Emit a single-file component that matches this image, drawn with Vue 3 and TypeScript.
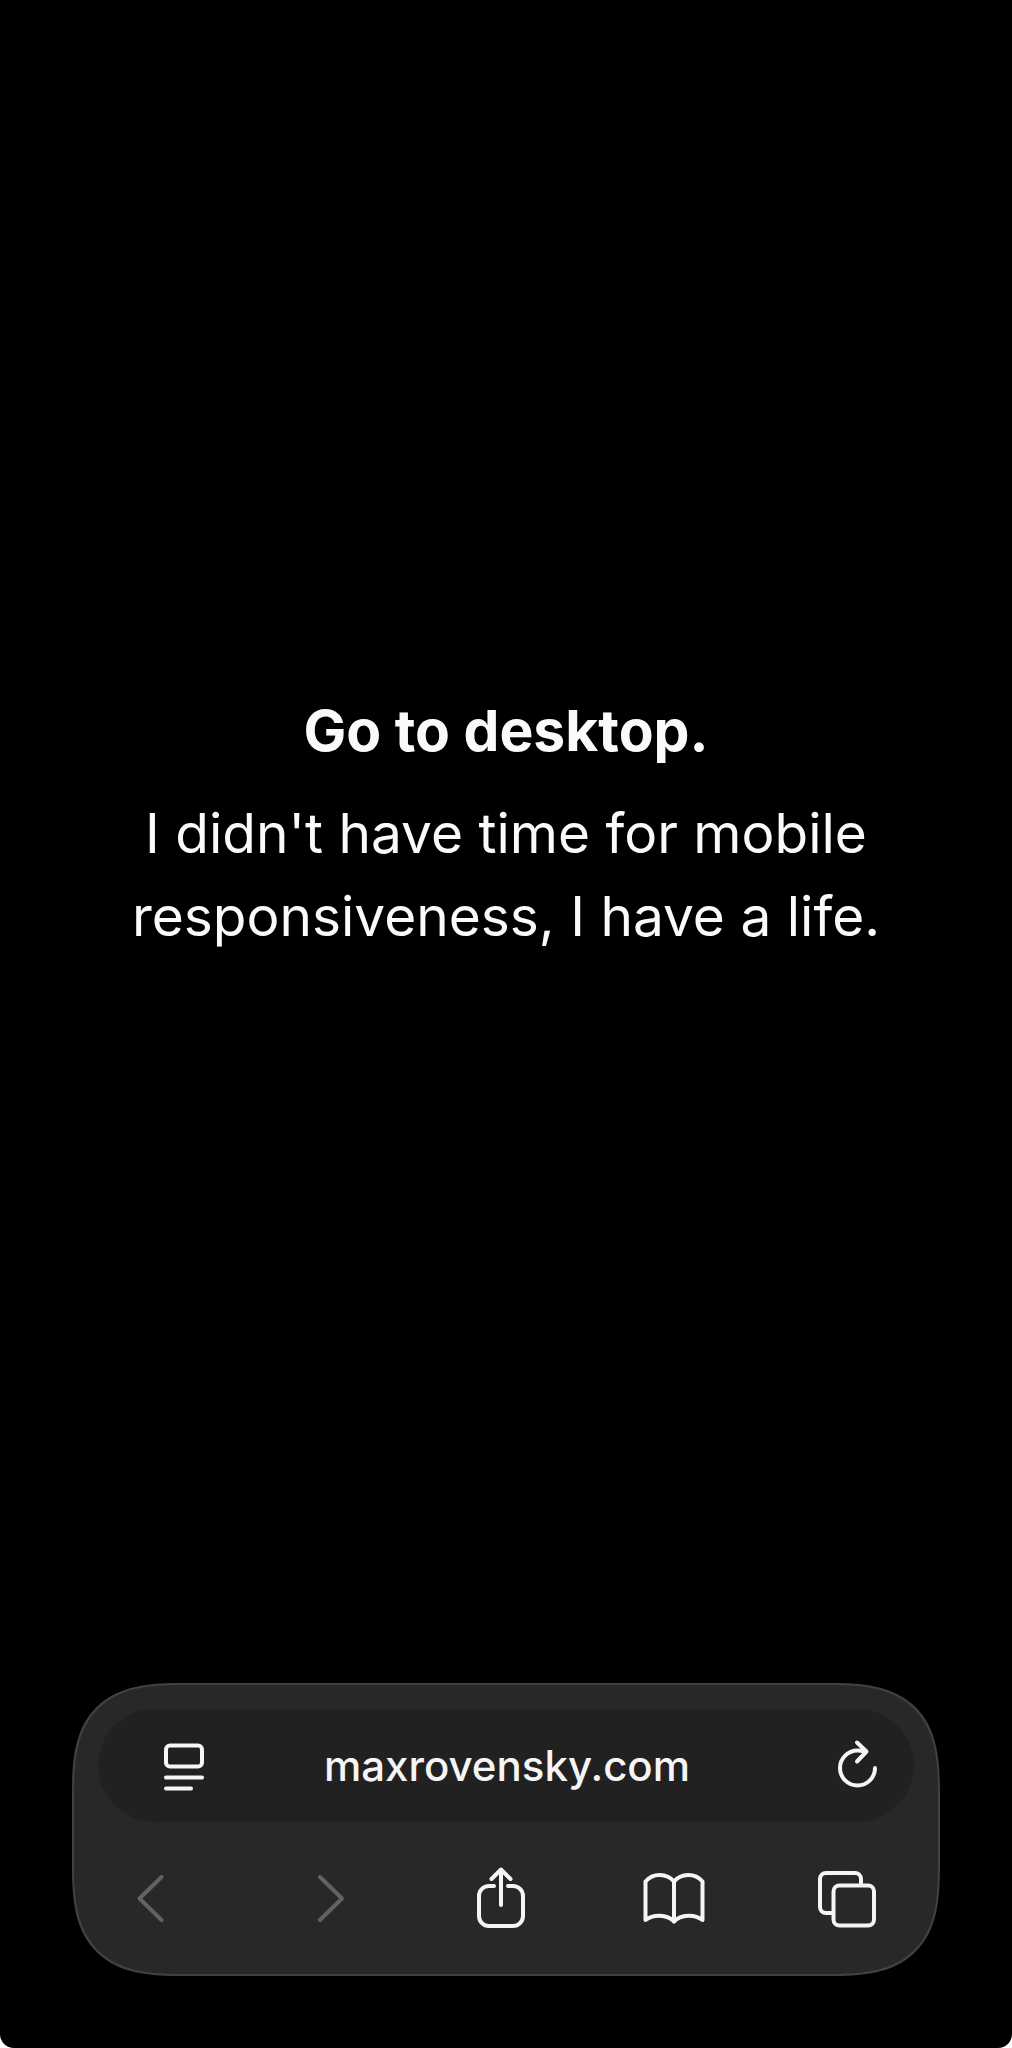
<script setup lang="ts">
import { ref } from 'vue'

interface Action {
  name: string
  disabled: boolean
  paths: string[]
}

const address = ref<string>('maxrovensky.com')

// Glyphs are drawn on a 68 x 68 grid.
const actions: Action[] = [
  {
    name: 'Back',
    disabled: true,
    paths: ['M44.5 13 22.5 34.5 44.5 56'],
  },
  {
    name: 'Forward',
    disabled: true,
    paths: ['M29 13 51 34.5 29 56'],
  },
  {
    name: 'Share',
    disabled: false,
    paths: [
      'M28 22H23A10 10 0 0 0 13 32V52A10 10 0 0 0 23 62H47A10 10 0 0 0 57 52V32A10 10 0 0 0 47 22H42',
      'M35 41V6',
      'M25.5 15 35 5.5 44.5 15',
    ],
  },
  {
    name: 'Bookmarks',
    disabled: false,
    paths: [
      'M34 17.5C27 9 13 8.5 5.5 17.5V56C13 50 27 50 34 57.5C41 50 55 50 62.5 56V17.5C55 8.5 41 9 34 17.5Z',
      'M34 17.5V57.5',
    ],
  },
  {
    name: 'Tabs',
    disabled: false,
    paths: [
      'M47 19V15A6 6 0 0 0 41 9H12A6 6 0 0 0 6 15V43A6 6 0 0 0 12 49H18',
      'M25.5 21.5H54A6 6 0 0 1 60 27.5V55.5A6 6 0 0 1 54 61.5H25.5A6 6 0 0 1 19.5 55.5V27.5A6 6 0 0 1 25.5 21.5Z',
    ],
  },
]
</script>

<template>
  <div class="screen">
    <main class="message">
      <h1 class="title">Go to desktop.</h1>
      <p class="body">I didn't have time for mobile responsiveness, I have a life.</p>
    </main>

    <footer class="browser-bar">
      <form class="address" @submit.prevent>
        <button type="button" class="icon-button" aria-label="Page menu">
          <svg viewBox="0 0 60 60" aria-hidden="true">
            <rect x="12" y="9.5" width="36" height="21" rx="4" />
            <path d="M12 41.5H48M12 52.5H37" />
          </svg>
        </button>
        <input v-model="address" class="url" type="text" aria-label="Address" spellcheck="false" />
        <button type="button" class="icon-button" aria-label="Reload">
          <svg viewBox="0 0 60 60" aria-hidden="true">
            <path d="M36.5 15.5C34 14.8 32 14.5 29.5 14.5A17.5 17.5 0 1 0 47 32" />
            <path d="M29 6.5 38.5 15.5 29 25.5" />
          </svg>
        </button>
      </form>

      <nav class="toolbar" aria-label="Browser controls">
        <button
          v-for="action in actions"
          :key="action.name"
          type="button"
          class="tool"
          :disabled="action.disabled"
          :aria-label="action.name"
        >
          <svg viewBox="0 0 68 68" aria-hidden="true">
            <path v-for="d in action.paths" :key="d" :d="d" />
          </svg>
        </button>
      </nav>
    </footer>
  </div>
</template>

<style>
html,
body {
  background: #fff;
}

body {
  margin: 0;
}
</style>

<style scoped>
.screen {
  display: flex;
  flex-direction: column;
  box-sizing: border-box;
  min-height: 100vh;
  padding: 0 72px 72px;
  border-radius: 0 0 14px 14px;
  background: #000;
  color: #fafafa;
  font-family: Inter, "Liberation Sans", sans-serif;
}

.message {
  display: flex;
  flex: 1;
  flex-direction: column;
  justify-content: center;
  gap: 20px;
  padding: 0 48px 36px;
  text-align: center;
}

.title,
.body {
  margin: 0;
  line-height: 83px;
}

.title {
  font-size: 57px;
  font-weight: 700;
}

.body {
  font-size: 55px;
  font-weight: 400;
}

.browser-bar {
  box-sizing: border-box;
  padding: 24px;
  border: 2px solid #414141;
  border-radius: 88px;
  background: #282828;
}

@supports (corner-shape: squircle) {
  .browser-bar {
    border-radius: 112px;
    corner-shape: superellipse(1.5);
  }
}

.address {
  display: flex;
  align-items: center;
  box-sizing: border-box;
  height: 113px;
  padding: 0 26px 0 56px;
  border-radius: 57px;
  background: #222122;
}

button {
  flex: none;
  padding: 0;
  border: 0;
  background: none;
  color: #f5f5f5;
}

svg {
  display: block;
  width: 100%;
  height: 100%;
  fill: none;
  stroke: currentColor;
  stroke-width: 4;
  stroke-linecap: round;
  stroke-linejoin: round;
}

.icon-button {
  width: 60px;
  height: 60px;
}

.url {
  flex: 1;
  min-width: 0;
  padding: 0 28px 0 0;
  border: 0;
  outline: 0;
  background: none;
  color: #f5f5f5;
  font: 500 42px/60px Inter, "Liberation Sans", sans-serif;
  text-align: center;
}

.toolbar {
  display: flex;
  justify-content: space-between;
  padding: 42px 32px 18px 19px;
}

.tool {
  width: 68px;
  height: 68px;
}

.tool:disabled {
  color: #626264;
}
</style>
